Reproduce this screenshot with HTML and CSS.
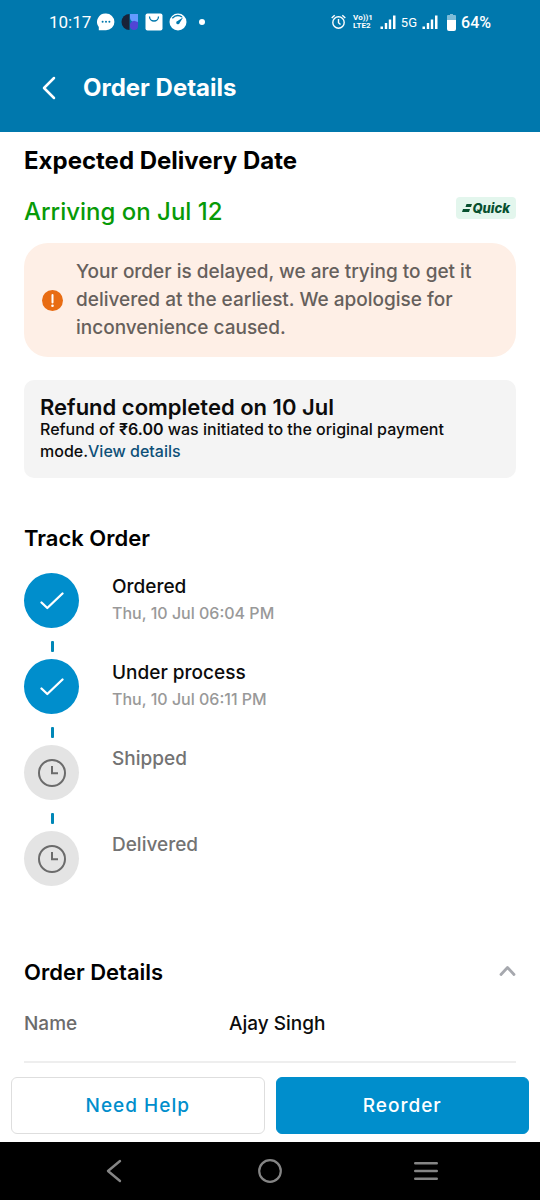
FILE: index.html
```html
<!DOCTYPE html>
<html lang="en">
<head>
<meta charset="utf-8">
<meta name="viewport" content="width=device-width, initial-scale=1">
<title>Order Details</title>
<link rel="stylesheet" href="styles.css">
</head>
<body>
<header class="top">
  <div class="status">
    <div class="status-left">
      <span class="clock">10:17</span>
      <svg width="18" height="18" viewBox="0 0 18 18" aria-hidden="true"><path d="M9 .5a8.400 8.400 0 1 1 0 16.800H1.800V14A8.400 8.400 0 0 1 9 .5z" fill="#fff"/><g fill="#0078ad"><circle cx="5.600" cy="8.800" r="1"/><circle cx="9" cy="8.800" r="1"/><circle cx="12.400" cy="8.800" r="1"/></g></svg>
      <svg width="18" height="18" viewBox="0 0 17 18" aria-hidden="true"><path d="M8 1v16A8 8 0 0 1 8 1z" fill="#192338"/><path d="M8.500 1h8v8H13a4.500 4.500 0 0 1-4.500-4.500z" fill="#649bff"/><path d="M8.500 11q1-2.500 4-3.200l4 1.200v4a4 4 0 0 1-4 4q-3 0-4-3z" fill="#5145d5"/></svg>
      <svg width="18" height="18" viewBox="0 0 18 18" aria-hidden="true"><rect x=".5" y=".5" width="17" height="17" rx="2" fill="#fff"/><path d="M4.500 3.500a4.500 4.500 0 0 0 9 0" fill="none" stroke="#0078ad" stroke-width="1.300"/></svg>
      <svg width="18" height="18" viewBox="0 0 18 18" aria-hidden="true"><circle cx="9" cy="9" r="8.500" fill="#fff"/><path d="M3.300 5.200Q8 .5 13 4" fill="none" stroke="#0078ad" stroke-width="1.400"/><path d="M14.200 4.200 10.600 10a1.700 1.700 0 1 1-2-2z" fill="#0078ad"/></svg>
      <span class="more-dot"></span>
    </div>
    <div class="status-right">
      <svg width="15" height="16" viewBox="0 0 15 16" fill="none" stroke="#fff" stroke-width="1.400" aria-hidden="true"><circle cx="7.500" cy="8.500" r="5.700"/><path d="M7.500 5v3.800l2 1.700M.7 4 3.700 1.200M14.300 4l-3-2.800"/></svg>
      <span class="volte"><span>Vo))1</span><span>LTE2</span></span>
      <svg width="16" height="15" viewBox="0 0 16 15" fill="#fff" aria-hidden="true"><path d="M.5 11.500H3V14H.5zM4.800 8h2.400v6H4.800zM8.800 4.500h2.400V14H8.800zM13 .5h2.500V14H13z"/></svg>
      <span class="network">5G</span>
      <svg width="16" height="15" viewBox="0 0 16 15" fill="#fff" aria-hidden="true"><path d="M.5 11.500H3V14H.5zM4.800 8h2.400v6H4.800zM8.800 4.500h2.400V14H8.800zM13 .5h2.500V14H13z"/></svg>
      <svg class="battery" width="9" height="17" viewBox="0 0 9 17" aria-hidden="true"><path d="M3 0h3v1h2a1 1 0 0 1 1 1v5H0V2a1 1 0 0 1 1-1h2z" fill="#7fbcd8"/><path d="M0 6h9v9a2 2 0 0 1-2 2H2a2 2 0 0 1-2-2z" fill="#fff"/></svg>
      <span class="percent">64%</span>
    </div>
  </div>
  <div class="app-bar">
    <button class="icon-button" type="button" aria-label="Back"><svg width="14" height="24" viewBox="0 0 14 24" fill="none" stroke="#fff" stroke-width="2.500" stroke-linecap="round" stroke-linejoin="round"><path d="M12 2 2 12l10 10"/></svg></button>
    <h1 class="page-title">Order Details</h1>
  </div>
</header>

<main class="content">
  <section class="delivery">
    <h2 class="heading heading-large">Expected Delivery Date</h2>
    <div class="arrival">
      <p class="arrival-date">Arriving on Jul 12</p>
      <span class="quick"><svg width="10" height="9" viewBox="0 0 10 9" fill="#07502f" aria-hidden="true"><path d="M4.500 0H10L9 3H3.500zM1 5h7L7 8H0z"/></svg>Quick</span>
    </div>
    <div class="alert" role="status">
      <svg class="alert-icon" width="21" height="21" viewBox="0 0 21 21" aria-hidden="true"><circle cx="10.500" cy="10.500" r="10.500" fill="#e86c13"/><path d="M10.500 5v7.500" stroke="#fff" stroke-width="2" stroke-linecap="round"/><circle cx="10.500" cy="15.800" r="1.300" fill="#fff"/></svg>
      <p class="alert-text">Your order is delayed, we are trying to get it delivered at the earliest. We apologise for inconvenience caused.</p>
    </div>
    <div class="refund">
      <h3 class="refund-title">Refund completed on 10 Jul</h3>
      <p class="refund-text">Refund of <strong>₹6.00</strong> was initiated to the original payment mode.<a class="link" href="#refund">View details</a></p>
    </div>
  </section>

  <section class="tracking">
    <h2 class="heading">Track Order</h2>
    <ol class="steps">
      <li class="step step-done">
        <span class="marker"><svg width="24" height="18" viewBox="0 0 24 18" fill="none" stroke="#fff" stroke-width="2.300" stroke-linecap="round" stroke-linejoin="round" aria-hidden="true"><path d="m1.500 10.500 5.800 5.500L22.500 1.500"/></svg></span>
        <div class="step-body"><p class="step-name">Ordered</p><p class="step-time">Thu, 10 Jul 06:04 PM</p></div>
      </li>
      <li class="step step-done">
        <span class="marker"><svg width="24" height="18" viewBox="0 0 24 18" fill="none" stroke="#fff" stroke-width="2.300" stroke-linecap="round" stroke-linejoin="round" aria-hidden="true"><path d="m1.500 10.500 5.800 5.500L22.500 1.500"/></svg></span>
        <div class="step-body"><p class="step-name">Under process</p><p class="step-time">Thu, 10 Jul 06:11 PM</p></div>
      </li>
      <li class="step">
        <span class="marker"><svg width="28" height="28" viewBox="0 0 28 28" fill="none" stroke="#6b6b6b" stroke-width="2" aria-hidden="true"><circle cx="14" cy="14" r="13"/><path d="M14 7v7.200h6"/></svg></span>
        <div class="step-body"><p class="step-name">Shipped</p></div>
      </li>
      <li class="step">
        <span class="marker"><svg width="28" height="28" viewBox="0 0 28 28" fill="none" stroke="#6b6b6b" stroke-width="2" aria-hidden="true"><circle cx="14" cy="14" r="13"/><path d="M14 7v7.200h6"/></svg></span>
        <div class="step-body"><p class="step-name">Delivered</p></div>
      </li>
    </ol>
  </section>

  <section class="details">
    <div class="details-head">
      <h2 class="heading">Order Details</h2>
      <button class="icon-button" type="button" aria-label="Collapse order details" aria-expanded="true"><svg width="17" height="14" viewBox="0 0 17 14" fill="none" stroke="#a6a8ae" stroke-width="2.800" stroke-linecap="round" stroke-linejoin="round"><path d="m2 9.500 6.500-7 6.500 7"/></svg></button>
    </div>
    <dl class="detail-row"><dt>Name</dt><dd>Ajay Singh</dd></dl>
  </section>
</main>

<footer class="bottom">
  <div class="actions">
    <button class="button" type="button">Need Help</button>
    <button class="button button-primary" type="button">Reorder</button>
  </div>
  <nav class="system-nav" aria-label="System">
    <button class="icon-button" type="button" aria-label="Back"><svg width="16" height="24" viewBox="0 0 16 24" fill="none" stroke="#858585" stroke-width="2.400" stroke-linecap="round" stroke-linejoin="round"><path d="M14 2 2 12l12 10"/></svg></button>
    <button class="icon-button" type="button" aria-label="Home"><svg width="24" height="24" viewBox="0 0 24 24" fill="none" stroke="#858585" stroke-width="2.200"><circle cx="12" cy="12" r="10.800"/></svg></button>
    <button class="icon-button" type="button" aria-label="Recent apps"><svg width="24" height="20" viewBox="0 0 24 20" fill="none" stroke="#858585" stroke-width="2.400" stroke-linecap="round"><path d="M1.200 2.200h21.600M1.200 10h21.600M1.200 17.800h21.600"/></svg></button>
  </nav>
</footer>
</body>
</html>
```

FILE: styles.css
```css
* {
  box-sizing: border-box;
}

body {
  margin: 0;
  min-height: 100vh;
  display: flex;
  flex-direction: column;
  font-family: Inter, "Liberation Sans", sans-serif;
  font-weight: 500;
  color: #0c0c0c;
  background: #fff;
}

h1, h2, h3, p, ol, dl, dd {
  margin: 0;
}

ol {
  padding: 0;
  list-style: none;
}

.icon-button {
  display: inline-flex;
  align-items: center;
  justify-content: center;
  padding: 0;
  border: 0;
  background: none;
  cursor: pointer;
}

.top {
  color: #fff;
  background: #0078ad;
}

.status {
  display: flex;
  justify-content: space-between;
  align-items: center;
  height: 44px;
  padding: 0 49px;
  font-family: Roboto, sans-serif;
}

.status-left,
.status-right {
  display: flex;
  align-items: center;
}

.status-left {
  gap: 6px;
  font-weight: 400;
}

.clock {
  font-size: 17px;
}

.more-dot {
  width: 6px;
  height: 6px;
  margin-left: 6px;
  border-radius: 50%;
  background: #fff;
}

.status-right {
  gap: 5px;
}

.volte {
  display: grid;
  margin: 0 2px;
  font-size: 8px;
  font-weight: 700;
  line-height: 8px;
}

.network {
  font-size: 13px;
  font-weight: 400;
}

.battery {
  margin-left: 4px;
}

.percent {
  font-size: 16px;
}

.app-bar {
  display: flex;
  align-items: center;
  gap: 27px;
  height: 88px;
  padding: 0 42px;
}

.page-title {
  font-size: 24px;
  font-weight: 700;
  line-height: 32px;
}

.content {
  flex: 1;
  padding: 13px 24px 0;
}

.heading {
  font-size: 22px;
  font-weight: 600;
  line-height: 28px;
  color: #000;
}

.heading-large {
  font-size: 24px;
  font-weight: 700;
  line-height: 32px;
}

.arrival {
  display: flex;
  justify-content: space-between;
  align-items: flex-start;
  margin: 20px 0 16px;
}

.arrival-date {
  font-size: 24px;
  line-height: 30px;
  color: #079a07;
}

.quick {
  display: flex;
  align-items: center;
  gap: 1px;
  height: 22px;
  padding: 0 6px;
  border-radius: 4px;
  font-size: 13px;
  font-style: italic;
  font-weight: 800;
  color: #07502f;
  background: #e3f6ed;
}

.alert {
  display: flex;
  align-items: center;
  gap: 13px;
  padding: 15px 18px;
  border-radius: 24px;
  background: #feefe6;
}

.alert-icon {
  flex: none;
}

.alert-text {
  font-size: 19px;
  line-height: 28px;
  color: #66605c;
}

.refund {
  margin-top: 23px;
  padding: 16px;
  border-radius: 10px;
  background: #f4f4f4;
}

.refund-title {
  font-size: 22px;
  font-weight: 600;
  line-height: 22px;
}

.refund-text {
  font-size: 16px;
  line-height: 22px;
}

.refund-text strong {
  font-weight: 600;
}

.link {
  color: #0e5078;
  text-decoration: none;
}

.tracking {
  margin-top: 46px;
}

.steps {
  display: grid;
  gap: 31px;
  margin-top: 21px;
}

.step {
  position: relative;
  display: flex;
  align-items: flex-start;
  gap: 33px;
  height: 55px;
  color: #737373;
}

.step + .step::before {
  content: "";
  position: absolute;
  top: -18px;
  left: 27px;
  width: 3px;
  height: 11px;
  border-radius: 1px;
  background: #0087b7;
}

.marker {
  display: flex;
  flex: none;
  align-items: center;
  justify-content: center;
  width: 55px;
  height: 55px;
  border-radius: 50%;
  background: #e4e4e4;
}

.step-done .marker {
  background: #008ecc;
}

.step-name {
  font-size: 19px;
  line-height: 27px;
}

.step-done .step-name {
  color: #0c0c0c;
}

.step-time {
  font-size: 16px;
  line-height: 27px;
  color: #999;
}

.details {
  margin-top: 72px;
}

.details-head {
  display: flex;
  justify-content: space-between;
  align-items: center;
}

.detail-row {
  display: grid;
  grid-template-columns: 5fr 7fr;
  padding: 24px 0 23px;
  border-bottom: 2px solid #eee;
  font-size: 19px;
  line-height: 28px;
}

.detail-row dt {
  color: #6b6b6b;
}

.bottom {
  position: sticky;
  bottom: 0;
}

.actions {
  display: grid;
  grid-template-columns: 1fr 1fr;
  gap: 11px;
  padding: 14px 11px 8px;
  background: #fff;
}

.button {
  height: 57px;
  border: 1px solid #dedede;
  border-radius: 6px;
  font: inherit;
  font-size: 19px;
  letter-spacing: 1px;
  color: #008ecc;
  background: #fff;
  cursor: pointer;
}

.button-primary {
  border-color: #008ecc;
  color: #fff;
  background: #008ecc;
}

.system-nav {
  display: grid;
  grid-template-columns: repeat(3, 1fr);
  height: 58px;
  padding: 0 36px;
  background: #000;
}
```
